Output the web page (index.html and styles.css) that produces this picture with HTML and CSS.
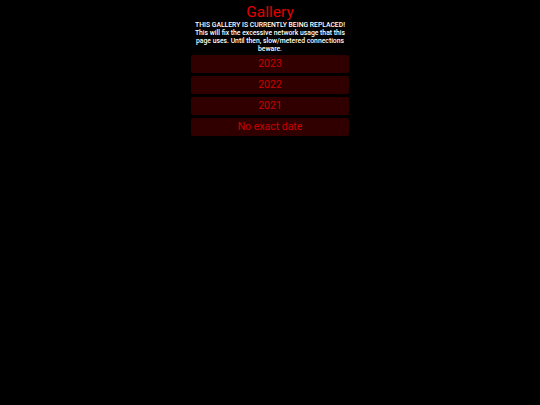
FILE: index.html
```html
<!DOCTYPE html>
<html>
<head>
<meta charset="utf-8">
<link rel="stylesheet" href="styles.css">
</head>
<body>
<main class="gallery">
  <h1 class="title">Gallery</h1>
  <p class="notice">THIS GALLERY IS CURRENTLY BEING REPLACED!<br>This will fix the excessive network usage that this page uses. Until then, slow/metered connections beware.</p>
  <nav class="years">
    <a class="year" href="#">2023</a>
    <a class="year" href="#">2022</a>
    <a class="year" href="#">2021</a>
    <a class="year" href="#">No exact date</a>
  </nav>
</main>
</body>
</html>
```
FILE: styles.css
```css
html, body {
  margin: 0;
  padding: 0;
  background: #000;
}
body {
  font-family: Roboto, "Liberation Sans", sans-serif;
}
.gallery {
  width: 158px;
  margin: 0 auto;
  display: flex;
  flex-direction: column;
  align-items: stretch;
  padding-top: 3px;
}
.title {
  margin: 0;
  font-size: 15.5px;
  font-weight: 400;
  line-height: 18px;
  color: #e00000;
  text-align: center;
}
.notice {
  margin: 0;
  font-size: 6.8px;
  font-weight: 500;
  line-height: 8px;
  color: #fff;
  text-align: center;
}
.years {
  display: flex;
  flex-direction: column;
  gap: 3px;
  margin-top: 2px;
}
.year {
  display: block;
  height: 18px;
  line-height: 18px;
  background: #300000;
  border-radius: 2px;
  color: #c80000;
  font-size: 10.5px;
  text-align: center;
  text-decoration: none;
}
```
